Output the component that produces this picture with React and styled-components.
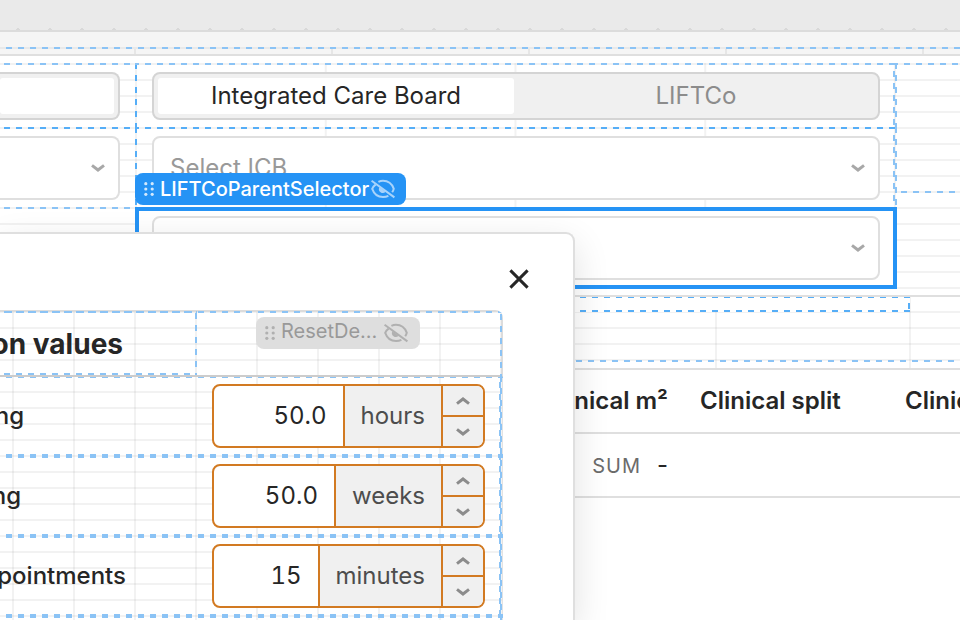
import styled, { createGlobalStyle, css } from "styled-components";

const LINE = "rgba(0, 0, 0, 0.05)";
const BORDER = "#dfdfdf";
const BLUE = "#2593f5";
const GUIDE = "#8bc3f5";
const GUIDE_DARK = "#56aef7";
const ORANGE = "#d27a22";

const dashX = (color, x, y, size = 2) =>
    `linear-gradient(90deg, ${color} 50%, transparent 50%) ${x} ${y} / 12px ${size}px repeat-x`;
const dashY = (color, x, y, size = 2) =>
    `linear-gradient(${color} 50%, transparent 50%) ${x} ${y} / ${size}px 12px repeat-y`;
const ruleRows = (y) => `linear-gradient(${LINE} 2px, transparent 2px) 0 ${y} / 100% 16px`;
const ruleCols = (x, step) => `linear-gradient(90deg, ${LINE} 2px, transparent 2px) ${x} 0 / ${step} 100%`;

const Chevron = ({ up }) => (
    <svg width="14" height="8" viewBox="0 0 14 8" fill="none" stroke="currentColor" strokeWidth="3" aria-hidden="true">
        <path d={up ? "M1 6.6L7 2L13 6.6" : "M1 1.4L7 6L13 1.4"} />
    </svg>
);

const Grip = () => (
    <svg width="10" height="14" viewBox="0 0 10 14" fill="currentColor" aria-hidden="true">
        {[1.7, 7, 12.3].map((y) => (
            <g key={y}>
                <circle cx="1.8" cy={y} r="1.6" />
                <circle cx="8.2" cy={y} r="1.6" />
            </g>
        ))}
    </svg>
);

const EyeOff = () => (
    <svg width="24" height="20" viewBox="0 0 24 20" fill="none" stroke="currentColor" strokeWidth="2" aria-hidden="true">
        <path d="M0.6 1.8L23.4 18.4" />
        <path d="M7.4 2.9C8.8 2.2 10.4 1.8 12 1.8C17.2 1.8 21 5 22.8 9.8C22.4 11.2 21.9 12.2 21.2 13.2" />
        <path d="M4.6 5.6C3 6.8 1.8 8.2 1.2 9.8C3 14.8 7 18 12 18C14 18 15.8 17.6 17.4 16.8" />
        <path d="M8.4 8.2A3.9 3.9 0 0 0 14.6 12.8Z" fill="currentColor" stroke="none" />
    </svg>
);

const Select = ({ label, placeholder }) => (
    <SelectBox>
        <select aria-label={label} defaultValue="">
            <option value="">{placeholder}</option>
        </select>
        <Chevron />
    </SelectBox>
);

const fields = [
    { label: "ng", end: 24, value: "50.0", unit: "hours" },
    { label: "ng", end: 21, value: "50.0", unit: "weeks" },
    { label: "pointments", end: 126, value: "15", unit: "minutes" },
];

function NumberInput({ id, value, unit }) {
    return (
        <NumberBox>
            <input id={id} defaultValue={value} size="1" inputMode="decimal" />
            <Unit>{unit}</Unit>
            <Stepper>
                <button type="button" aria-label="Increase"><Chevron up /></button>
                <button type="button" aria-label="Decrease"><Chevron /></button>
            </Stepper>
        </NumberBox>
    );
}

function AssumptionsDialog() {
    return (
        <Dialog role="dialog" aria-label="Assumption values">
            <DialogHeader>
                <CloseButton type="button" aria-label="Close">
                    <svg width="20" height="20" viewBox="0 0 20 20" stroke="currentColor" strokeWidth="3" aria-hidden="true">
                        <path d="M1.4 1.4L18.6 18.6M18.6 1.4L1.4 18.6" />
                    </svg>
                </CloseButton>
            </DialogHeader>
            <Form>
                <FormHead>
                    <TitleCell>
                        <Clipped as="h2" $end={123}>on values</Clipped>
                    </TitleCell>
                    <MutedTag><Grip /><span>ResetDe...</span><EyeOff /></MutedTag>
                </FormHead>
                <FormBody>
                    {fields.map(({ label, end, value, unit }) => (
                        <FormRow key={unit}>
                            <Clipped as="label" htmlFor={unit} $end={end}>{label}</Clipped>
                            <NumberInput id={unit} value={value} unit={unit} />
                        </FormRow>
                    ))}
                    <FormRow />
                </FormBody>
            </Form>
        </Dialog>
    );
}

function App() {
    return (
        <Page>
            <GlobalStyle />
            <CanvasEdge />
            <HeaderFrame />
            <Container>
                <Filters>
                    <SideCell>
                        <Segmented><button type="button" aria-label="Region" aria-pressed="true" /></Segmented>
                    </SideCell>
                    <MainCell>
                        <Segmented>
                            <button type="button" aria-pressed="true">Integrated Care Board</button>
                            <button type="button" aria-pressed="false">LIFTCo</button>
                        </Segmented>
                    </MainCell>
                    <EmptyCell />
                    <SideCell $dark><Select label="Area" placeholder="" /></SideCell>
                    <MainCell $dark><Select label="ICB" placeholder="Select ICB" /></MainCell>
                    <SideCell />
                    <SelectedCell>
                        <Tag><Grip /><span>LIFTCoParentSelector</span><EyeOff /></Tag>
                        <Select label="Parent" placeholder="" />
                    </SelectedCell>
                </Filters>
            </Container>
            <Spacer><SpacerBox /></Spacer>
            <Table>
                <colgroup><col className="area" /><col className="split" /><col /></colgroup>
                <thead>
                    <tr><th className="number">Clinical m²</th><th>Clinical split</th><th>Clinical</th></tr>
                </thead>
                <tbody>
                    <tr><td className="number"><small>SUM</small>-</td><td /><td /></tr>
                </tbody>
            </Table>
            <AssumptionsDialog />
        </Page>
    );
}

export default App;

const GlobalStyle = createGlobalStyle`
    * {
        box-sizing: border-box;
    }
    body {
        margin: 0;
        background: #fff;
        color: #262626;
        font-family: Inter, "Liberation Sans", sans-serif;
        font-size: 24px;
        line-height: 32px;
    }
    button, input, select {
        font: inherit;
        color: inherit;
        margin: 0;
        padding: 0;
        border: 0;
        background: none;
    }
    svg {
        display: block;
        flex: none;
    }
`

const Page = styled.main`
    position: relative;
    height: 100vh;
    overflow: hidden;
`

const CanvasEdge = styled.div`
    height: 32px;
    border-bottom: 2px solid #dcdcdc;
    background: radial-gradient(circle at 18px 30px, #d9d9d9 2px, transparent 2px) 0 0 / 32px 32px #eaeaea;
`

const HeaderFrame = styled.header`
    height: 24px;
    border-bottom: 2px solid ${BORDER};
    background:
        ${dashX(GUIDE, "6px", "15px")},
        linear-gradient(#e9e9e9, #e9e9e9) 0 15px / 100% 2px no-repeat,
        linear-gradient(90deg, #e6e6e6 2px, transparent 2px) 134px 17px / 197px 5px repeat-x,
        #f5f5f5;
`

const Container = styled.section`
    padding-top: 7px;
    border-bottom: 2px solid ${BORDER};
`

const Filters = styled.div`
    display: grid;
    grid-template-columns: 135px 1fr 63px;
    grid-template-rows: 64px 80px 88px;
    background: ${ruleRows("0")};
`

const SideCell = styled.div`
    padding: 9px 15px 8px 0;
    background: ${(p) => dashX(p.$dark ? GUIDE_DARK : GUIDE, "4px", "0")};
`

const MainCell = styled.div`
    padding: 9px 17px 8px;
    background:
        ${(p) => dashX(p.$dark ? GUIDE_DARK : GUIDE, "10px", "0")},
        ${dashY(GUIDE_DARK, "0", "0")},
        ${dashY(GUIDE, "calc(100% - 2px)", "8px")},
        ${dashY(GUIDE, "100%", "0")},
        ${ruleCols("0", "24.9%")};
`

const EmptyCell = styled.div`
    grid-row: span 3;
    background:
        ${dashX(GUIDE, "7px", "0")},
        ${dashX(GUIDE, "4px", "128px")};
`

const SelectedCell = styled.div`
    position: relative;
    height: 82px;
    padding: 5px 13px;
    border: 4px solid ${BLUE};
    background: #fff;
`

const tagBase = css`
    display: flex;
    align-items: center;
    height: 32px;
    border-radius: 8px;
    font-size: 20px;
    white-space: nowrap;
    span {
        line-height: 28px;
    }
`

const Tag = styled.div`
    ${tagBase}
    position: absolute;
    left: -4px;
    bottom: 100%;
    margin-bottom: 6px;
    padding: 0 11px 0 9px;
    background: ${BLUE};
    color: #fff;
    font-weight: 500;
    span {
        margin: 0 2px 0 6px;
    }
    svg {
        opacity: 0.8;
    }
    svg:last-child {
        opacity: 0.6;
    }
`

const MutedTag = styled.div`
    ${tagBase}
    margin: 7px 0 0 59px;
    padding: 0 12px 0 9px;
    background: #dedede;
    color: #999;
    span {
        height: 32px;
        margin: 0 7px 0 6px;
    }
    svg {
        color: #b0b0b0;
    }
`

const Segmented = styled.div`
    display: grid;
    grid-auto-flow: column;
    grid-auto-columns: 1fr;
    gap: 4px;
    height: 48px;
    padding: 4px;
    border: 2px solid #d4d4d4;
    border-radius: 8px;
    background: #f0f0f0;
    button {
        border-radius: 3px;
        color: #8c8c8c;
    }
    button[aria-pressed="true"] {
        background: #fff;
        color: #262626;
    }
    ${SideCell} & {
        border-left: 0;
        padding-left: 0;
        border-radius: 0 8px 8px 0;
    }
`

const SelectBox = styled.div`
    display: grid;
    align-items: center;
    height: 64px;
    border: 2px solid ${BORDER};
    border-radius: 8px;
    background: #fff;
    color: #999;
    select {
        grid-area: 1 / 1;
        width: 100%;
        height: 60px;
        padding: 0 40px 0 16px;
        appearance: none;
    }
    svg {
        grid-area: 1 / 1;
        justify-self: end;
        margin-right: 13px;
        color: #a8a8a8;
        pointer-events: none;
    }
    ${SideCell} & {
        border-left: 0;
        border-radius: 0 8px 8px 0;
    }
`

const Spacer = styled.div`
    height: 73px;
    border-bottom: 2px solid ${BORDER};
    background:
        ${dashX(GUIDE, "0", "63px")},
        linear-gradient(${LINE} 2px, transparent 2px) 0 14px / 100% 16px,
        ${ruleCols("133px", "194px")};
`

const SpacerBox = styled.div`
    height: 15px;
    margin-right: 50px;
    background:
        ${dashX(GUIDE_DARK, "4px", "0", 1)},
        ${dashX(GUIDE_DARK, "4px", "100%")},
        ${dashY(GUIDE_DARK, "100%", "6px")},
        #fff;
`

const Table = styled.table`
    width: 100%;
    table-layout: fixed;
    border-collapse: separate;
    border-spacing: 0;
    .area {
        width: 684px;
    }
    .split {
        width: 205px;
    }
    th, td {
        height: 64px;
        padding: 0 16px;
        border-bottom: 2px solid ${BORDER};
        text-align: left;
        white-space: nowrap;
    }
    th {
        font-weight: 600;
    }
    .number {
        text-align: right;
    }
    small {
        margin-right: 16px;
        color: #6b6b6b;
        font-size: 20px;
        letter-spacing: 1px;
    }
`

const Dialog = styled.aside`
    position: absolute;
    top: 232px;
    bottom: 0;
    left: 0;
    width: 575px;
    overflow: hidden;
    border: solid ${BORDER};
    border-width: 2px 2px 0 0;
    border-radius: 0 9px 0 0;
    background: #fff;
    box-shadow: 0 12px 36px rgba(0, 0, 0, 0.12);
`

const DialogHeader = styled.div`
    display: flex;
    justify-content: flex-end;
    align-items: center;
    height: 76px;
    padding: 14px 32px 0 0;
`

const CloseButton = styled.button`
    display: grid;
    place-items: center;
    width: 44px;
    height: 44px;
`

const Form = styled.form`
    margin-right: 70px;
`

const FormHead = styled.div`
    display: flex;
    align-items: flex-start;
    height: 66px;
    border-radius: 0 8px 0 0;
    background:
        ${dashX(GUIDE, "6px", "1px")},
        ${dashY(GUIDE, "calc(100% - 1px)", "4px")},
        linear-gradient(#dcdcdc, #dcdcdc) 0 0 / 100% 2px no-repeat,
        linear-gradient(#dcdcdc, #dcdcdc) 100% 0 / 2px 100% no-repeat,
        linear-gradient(#ccc, #ccc) 0 100% / 100% 1px no-repeat,
        ${ruleRows("1px")},
        ${ruleCols("12px", "61px")};
`

const TitleCell = styled.div`
    width: 197px;
    height: 65px;
    padding-top: 18px;
    background:
        ${dashX(GUIDE, "4px", "1px")},
        ${dashX(GUIDE, "4px", "100%")},
        ${dashY(GUIDE, "100%", "3px")};
`

const Clipped = styled.div`
    display: flex;
    justify-content: flex-end;
    width: ${(p) => p.$end}px;
    margin: 0;
    overflow: hidden;
    font-size: 24px;
    font-weight: 500;
    white-space: nowrap;
    ${TitleCell} & {
        font-size: 28px;
        font-weight: 700;
    }
`

const FormBody = styled.div`
    background:
        ${dashX(GUIDE, "6px", "1px", 1)},
        ${dashY(GUIDE, "calc(100% - 1px)", "0")},
        ${dashY(GUIDE, "calc(100% - 2px)", "6px")},
        linear-gradient(#ccc, #ccc) 0 0 / 100% 1px no-repeat,
        linear-gradient(#e2e2e2, #e2e2e2) 100% 0 / 1px 100% no-repeat,
        ${ruleRows("15px")},
        ${ruleCols("12px", "61px")};
`

const FormRow = styled.div`
    display: flex;
    align-items: center;
    justify-content: space-between;
    height: 80px;
    padding-right: 18px;
    background: ${dashX(GUIDE, "6px", "100%")};
    & + & {
        background: ${dashX(GUIDE, "6px", "0")}, ${dashX(GUIDE, "6px", "100%")};
    }
`

const NumberBox = styled.div`
    display: flex;
    width: 273px;
    height: 64px;
    overflow: hidden;
    border: 2px solid ${ORANGE};
    border-radius: 8px;
    background: #fff;
    input {
        flex: 1;
        min-width: 0;
        padding: 0 16px;
        text-align: right;
        font-variant-numeric: tabular-nums;
    }
`

const Unit = styled.span`
    padding: 0 16px;
    border-left: 2px solid ${ORANGE};
    background: #f0f0f0;
    color: #4d4d4d;
    line-height: 60px;
`

const Stepper = styled.div`
    display: grid;
    grid-template-rows: 29px 31px;
    width: 42px;
    border-left: 2px solid ${ORANGE};
    background: #f0f0f0;
    color: #8c8c8c;
    button {
        display: grid;
        place-items: center;
    }
    button + button {
        border-top: 2px solid ${ORANGE};
    }
`
